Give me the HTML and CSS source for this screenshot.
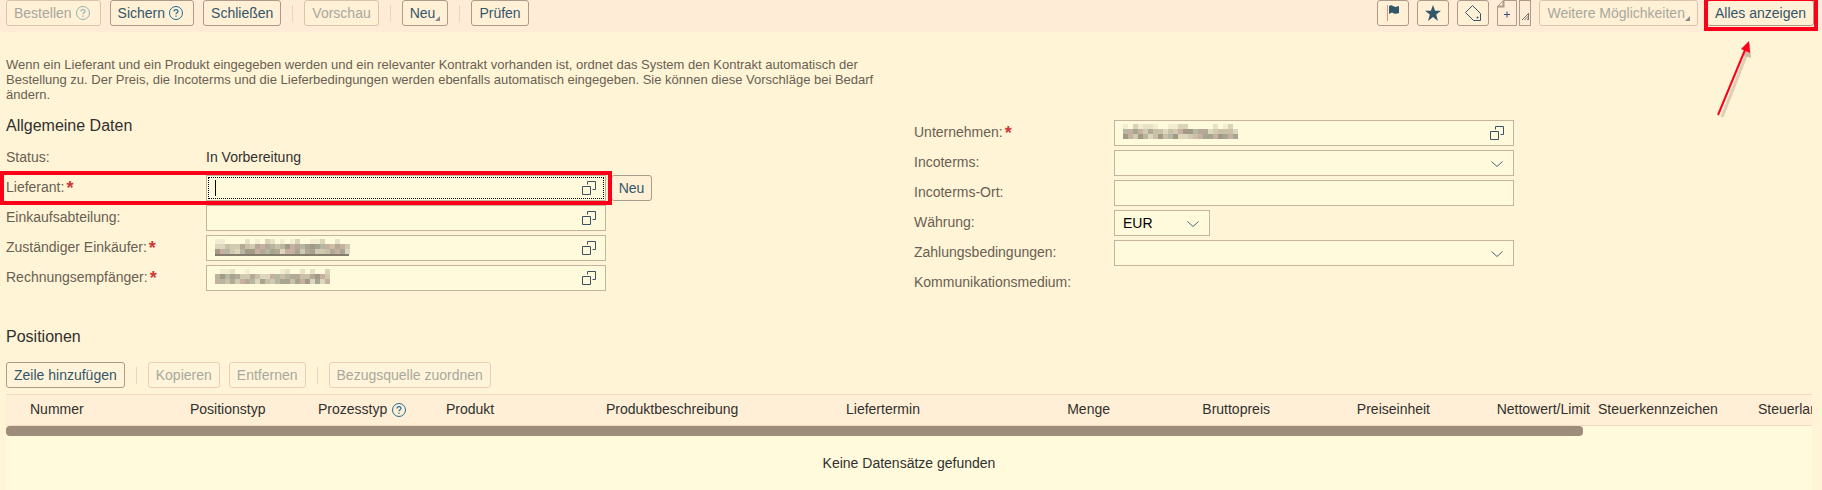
FILE: index.html
```html
<!DOCTYPE html>
<html lang="de">
<head>
  <meta charset="UTF-8">
  <meta name="viewport" content="width=device-width, initial-scale=1.0">
  <title>Neue Bestellung</title>
  <link rel="stylesheet" href="styles.css">
</head>
<body>

<!-- shared icons -->
<svg class="sprite" aria-hidden="true">
  <symbol id="help" viewBox="0 0 16 16">
    <circle cx="8" cy="8" r="6.5" fill="none" stroke="currentColor"/>
    <path d="M6 6.500C6 4 10 4 10 6.300C10 7.700 8 7.800 8 9.300M8 10.500V11.800" fill="none" stroke="currentColor" stroke-width="1.200"/>
  </symbol>
  <symbol id="lookup" viewBox="0 0 14 14">
    <path d="M.5 5.500h8v8h-8zM5.500 3.500v-3h8v8h-3" fill="none" stroke="currentColor"/>
  </symbol>
  <symbol id="corner" viewBox="0 0 6 6">
    <path d="M6 0V6H0z" fill="currentColor"/>
  </symbol>
</svg>

<header class="toolbar">
  <button class="btn" disabled>Bestellen <svg class="help"><use href="#help"/></svg></button>
  <button class="btn">Sichern <svg class="help"><use href="#help"/></svg></button>
  <button class="btn">Schließen</button>
  <span class="sep"></span>
  <button class="btn" disabled>Vorschau</button>
  <span class="sep"></span>
  <button class="btn">Neu<svg class="corner"><use href="#corner"/></svg></button>
  <span class="sep"></span>
  <button class="btn">Prüfen</button>

  <div class="tools">
    <button class="btn icon" aria-label="Kennzeichnen">
      <svg width="16" height="18" viewBox="0 0 16 18"><path d="M2.500 1V17" stroke="#e0907c"/><path d="M4 2C6 .5 7 1.500 9 2.500S12 2.500 14 2V9C12 10 10 10 8.500 9.200S6 9 4 10z" fill="currentColor"/></svg>
    </button>
    <button class="btn icon" aria-label="Favorit">
      <svg width="18" height="18" viewBox="0 0 18 18"><path d="M9 1l2.100 5.700H17l-4.800 3.800L14 17l-5-4-5 4 1.800-6.500L1 6.700h5.900z" fill="currentColor"/></svg>
    </button>
    <button class="btn icon" aria-label="Etikett">
      <svg width="18" height="18" viewBox="0 0 18 18"><path d="M8.500 1.500L1.500 8.500L9.500 16.500H16.500V9.500z" fill="none" stroke="currentColor"/><circle cx="13.500" cy="13.500" r="1" fill="currentColor"/></svg>
    </button>
    <div class="split">
      <button class="doc" aria-label="Notiz hinzufügen">
        <svg width="20" height="26" viewBox="0 0 20 26"><path d="M6.500 .5H19.500V25.500H.5V6.500z" fill="none" stroke="#ad9a88"/><path d="M6.500 .5V6.500H.5" fill="none" stroke="#ad9a88" stroke-width="2"/><path d="M7 14.500h6M10 11.500v6" stroke="#3b4a80"/></svg>
      </button>
      <button class="doc-menu" aria-label="Mehr">
        <svg width="7" height="7" viewBox="0 0 7 7"><path d="M0 7L7 0M2.500 7L7 2.500M5 7L7 5M6.500 1V7" fill="none" stroke="#77706c"/></svg>
      </button>
    </div>
    <button class="btn" disabled>Weitere Möglichkeiten<svg class="corner"><use href="#corner"/></svg></button>
    <div class="marked-btn">
      <button class="btn">Alles anzeigen</button>
      <svg class="arrow" width="40" height="80" viewBox="0 0 40 80">
        <path d="M6 77L30 16" stroke="#c9b6a0" stroke-width="3" opacity=".6"/>
        <path d="M34 3L35 18L26 15z" fill="#a89a86" opacity=".6"/>
        <path d="M2 75L29 10" stroke="#fb0018" stroke-width="2"/>
        <path d="M33 1L34 13L25 9z" fill="#fb0018"/>
      </svg>
    </div>
  </div>
</header>

<main>
  <p class="hint">Wenn ein Lieferant und ein Produkt eingegeben werden und ein relevanter Kontrakt vorhanden ist, ordnet das System den Kontrakt automatisch der Bestellung zu. Der Preis, die Incoterms und die Lieferbedingungen werden ebenfalls automatisch eingegeben. Sie können diese Vorschläge bei Bedarf ändern.</p>

  <form class="form">
    <section class="col">
      <h2>Allgemeine Daten</h2>
      <div class="row status">
        <span class="label">Status:</span>
        <span class="value">In Vorbereitung</span>
      </div>
      <div class="row marked">
        <label for="lieferant">Lieferant:<b>*</b></label>
        <div class="field focused">
          <input type="text" id="lieferant">
          <span class="caret"></span>
          <svg class="lookup"><use href="#lookup"/></svg>
        </div>
        <button type="button" class="btn">Neu</button>
      </div>
      <div class="row">
        <label for="abteilung">Einkaufsabteilung:</label>
        <div class="field">
          <input type="text" id="abteilung">
          <svg class="lookup"><use href="#lookup"/></svg>
        </div>
      </div>
      <div class="row">
        <label for="einkaeufer">Zuständiger Einkäufer:<b>*</b></label>
        <div class="field">
          <input type="text" id="einkaeufer">
          <svg class="redacted" data-seed="3" data-cols="27" data-line="1" width="135" height="17"></svg>
          <svg class="lookup"><use href="#lookup"/></svg>
        </div>
      </div>
      <div class="row">
        <label for="empfaenger">Rechnungsempfänger:<b>*</b></label>
        <div class="field">
          <input type="text" id="empfaenger">
          <svg class="redacted" data-seed="8" data-cols="23" width="135" height="17"></svg>
          <svg class="lookup"><use href="#lookup"/></svg>
        </div>
      </div>
    </section>

    <section class="col right">
      <div class="row">
        <label for="unternehmen">Unternehmen:<b>*</b></label>
        <div class="field">
          <input type="text" id="unternehmen">
          <svg class="redacted" data-seed="5" data-cols="23" width="135" height="17"></svg>
          <svg class="lookup"><use href="#lookup"/></svg>
        </div>
      </div>
      <div class="row">
        <label for="incoterms">Incoterms:</label>
        <div class="field">
          <select id="incoterms"><option></option></select>
          <svg class="chevron" viewBox="0 0 12 6"><path d="M.5 .5L6 5.500L11.500 .5"/></svg>
        </div>
      </div>
      <div class="row">
        <label for="ort">Incoterms-Ort:</label>
        <div class="field"><input type="text" id="ort"></div>
      </div>
      <div class="row">
        <label for="waehrung">Währung:</label>
        <div class="field short">
          <select id="waehrung"><option>EUR</option></select>
          <svg class="chevron" viewBox="0 0 12 6"><path d="M.5 .5L6 5.500L11.500 .5"/></svg>
        </div>
      </div>
      <div class="row">
        <label for="zahlung">Zahlungsbedingungen:</label>
        <div class="field">
          <select id="zahlung"><option></option></select>
          <svg class="chevron" viewBox="0 0 12 6"><path d="M.5 .5L6 5.500L11.500 .5"/></svg>
        </div>
      </div>
      <div class="row">
        <span class="label">Kommunikationsmedium:</span>
      </div>
    </section>
  </form>

  <section class="items">
    <h2>Positionen</h2>
    <div class="actions">
      <button class="btn">Zeile hinzufügen</button>
      <span class="sep"></span>
      <button class="btn" disabled>Kopieren</button>
      <button class="btn" disabled>Entfernen</button>
      <span class="sep"></span>
      <button class="btn" disabled>Bezugsquelle zuordnen</button>
    </div>
    <div class="grid">
      <table>
        <colgroup>
          <col class="w20"><col class="w160"><col class="w128"><col class="w128"><col class="w160"><col class="w240"><col class="w112">
          <col class="w160"><col class="w160"><col class="w160"><col class="w160"><col class="w160"><col class="w160">
        </colgroup>
        <thead>
          <tr>
            <th></th>
            <th>Nummer</th>
            <th>Positionstyp</th>
            <th>Prozesstyp <svg class="help"><use href="#help"/></svg></th>
            <th>Produkt</th>
            <th>Produktbeschreibung</th>
            <th>Liefertermin</th>
            <th class="num">Menge</th>
            <th class="num">Bruttopreis</th>
            <th class="num">Preiseinheit</th>
            <th class="num">Nettowert/Limit</th>
            <th>Steuerkennzeichen</th>
            <th>Steuerland</th>
          </tr>
        </thead>
      </table>
      <div class="scrollbar"></div>
      <p class="empty">Keine Datensätze gefunden</p>
    </div>
  </section>
</main>

<script src="script.js"></script>
</body>
</html>
```

FILE: styles.css
```css
*,
*::before,
*::after {
  box-sizing: border-box;
}
body {
  margin: 0;
  overflow: hidden;
  background: #fff4d6;
  color: #32302f;
  font-family: "Liberation Sans", Arial, sans-serif;
  font-size: 14px;
  line-height: 16px;
}
h2 {
  margin: 0;
  font-size: 16px;
  font-weight: normal;
  line-height: 20px;
}
.sprite {
  display: none;
}

/* buttons */
.btn {
  display: inline-flex;
  align-items: center;
  justify-content: center;
  height: 26px;
  padding: 0 7px;
  border: 1px solid #ad9a88;
  border-radius: 3px;
  background: #fff0d6;
  color: #34566b;
  font: inherit;
  white-space: nowrap;
}
.btn:disabled {
  border-color: #dcc4ac;
  color: #a8a89e;
}
.btn:disabled .help {
  color: #8fb4b4;
}
.btn.icon {
  width: 32px;
  padding: 0;
}
.help {
  width: 16px;
  height: 16px;
  margin-left: 3px;
  color: #1f6d96;
}
.toolbar .help {
  margin-right: 2px;
}
.corner {
  align-self: flex-end;
  width: 5px;
  height: 5px;
  margin-bottom: 4px;
  color: #8d8a8c;
}
.sep {
  width: 1px;
  height: 17px;
  margin: 0 2px;
  background: #efd3b8;
}

/* top bar */
.toolbar {
  display: flex;
  align-items: center;
  gap: 9px;
  height: 32px;
  padding: 0 8px 6px 6px;
  background: #ffecd6;
}
.tools {
  display: flex;
  gap: 8px;
  margin-left: auto;
}
.tools .marked-btn {
  margin-left: 1px;
}
.split {
  display: flex;
  gap: 2px;
}
.doc,
.doc-menu {
  height: 26px;
  padding: 0;
  border: 0;
  background: none;
}
.doc svg {
  display: block;
}
.doc-menu {
  display: flex;
  align-items: flex-end;
  justify-content: center;
  width: 12px;
  padding-bottom: 5px;
  border: 1px solid #ad9a88;
}
.marked-btn {
  position: relative;
}
.marked-btn::after {
  content: "";
  position: absolute;
  inset: -3px -4px -5px -3px;
  border: 4px solid #fb0018;
  pointer-events: none;
}
.arrow {
  position: absolute;
  top: 40px;
  left: 9px;
}

/* form */
main {
  padding: 0 10px 0 6px;
}
.hint {
  max-width: 900px;
  margin: 0;
  padding-top: 25px;
  color: #695f53;
  font-size: 13px;
  line-height: 15px;
}
.form {
  display: flex;
  gap: 256px;
  margin-top: 14px;
}
.col {
  display: flex;
  flex-direction: column;
  gap: 4px;
  width: 652px;
}
.right {
  padding-top: 4px;
}
.row {
  display: flex;
  height: 26px;
  position: relative;
}
.row.status {
  height: 32px;
  padding-top: 6px;
}
.col h2 {
  height: 19px;
}
label,
.label {
  width: 200px;
  padding-top: 4px;
  color: #695f53;
}
.value {
  padding-top: 4px;
}
label b {
  margin-left: 2px;
  color: #cc3a3a;
  font-size: 18px;
  line-height: 14px;
  vertical-align: -2px;
}
.field {
  display: flex;
  position: relative;
  width: 400px;
}
.short {
  width: 96px;
}
.field input,
.field select {
  width: 100%;
  padding: 0 8px;
  border: 1px solid #c5b39c;
  border-radius: 0;
  outline: 0;
  background: #fffadc;
  color: #000;
  font: inherit;
  appearance: none;
}
.focused::after {
  content: "";
  position: absolute;
  inset: 2px;
  border: 1px dotted #000;
  pointer-events: none;
}
.caret {
  position: absolute;
  top: 5px;
  left: 9px;
  width: 1px;
  height: 16px;
  background: #000;
}
.lookup {
  position: absolute;
  top: 6px;
  right: 10px;
  width: 14px;
  height: 14px;
  color: #3b5266;
  pointer-events: none;
}
.chevron {
  position: absolute;
  top: 11px;
  right: 11px;
  width: 12px;
  height: 6px;
  fill: none;
  stroke: #4d6478;
  pointer-events: none;
}
.redacted {
  position: absolute;
  top: 4px;
  left: 9px;
  pointer-events: none;
}
.row .btn {
  margin-left: 5px;
  width: 41px;
}
.marked::after {
  content: "";
  position: absolute;
  top: -4px;
  left: -6px;
  width: 618px;
  height: 34px;
  max-width: 612px;
  border: 4px solid #fb0018;
  pointer-events: none;
}

/* items */
.items {
  margin-top: 31px;
}
.actions {
  display: flex;
  align-items: center;
  gap: 9px;
  margin: 15px 0 6px;
}
.actions .btn {
  background: #fff4d9;
}
.actions .btn:disabled {
  border-color: #efcdb4;
}
.grid {
  overflow: hidden;
  border-top: 1px solid #f3d9bf;
  background: #fffadc;
}
table {
  width: 1888px;
  border-collapse: collapse;
  table-layout: fixed;
}
th {
  height: 30px;
  padding: 0 4px 1px;
  border-bottom: 1px solid #f3d9bf;
  background: #ffefd6;
  font-weight: normal;
  text-align: left;
  white-space: nowrap;
}
th .help {
  margin-left: 0;
  vertical-align: -4px;
}
.num {
  text-align: right;
}
.w20 { width: 20px; }
.w112 { width: 112px; }
.w128 { width: 128px; }
.w160 { width: 160px; }
.w240 { width: 240px; }
.scrollbar {
  width: 87.3%;
  height: 10px;
  border-radius: 4px;
  background: #9c8c79;
}
.empty {
  margin: 0;
  padding: 19px 0;
  text-align: center;
}
```

FILE: script.js
```js
// pixelated blocks over the confidential values
const light = ["#e6e2c6", "#f2ecd0", "#d9d3b8"];
const palette = ["#b3a996", "#c9c0a6", "#a39a86", "#d0cab0", "#c8b0a0", "#b5b7a2", "#ddd6bc", "#a6a58f"];

document.querySelectorAll(".redacted").forEach(svg => {
  let seed = Number(svg.dataset.seed);
  const next = () => (seed = (seed * 73 + 41) % 1009);
  let html = "";
  for (let col = 0; col < Number(svg.dataset.cols); col++) {
    for (let row = 0; row < 3; row++) {
      if (row === 0 && next() % 2) continue;
      const colors = row === 0 ? light : palette;
      html += `<rect x="${col * 5}" y="${row * 5}" width="5" height="5" fill="${colors[next() % colors.length]}"/>`;
    }
  }
  if (svg.dataset.line) {
    html += `<rect x="0" y="15" width="134" height="2" fill="#857d6c"/>`;
  }
  svg.innerHTML = html;
});
```
